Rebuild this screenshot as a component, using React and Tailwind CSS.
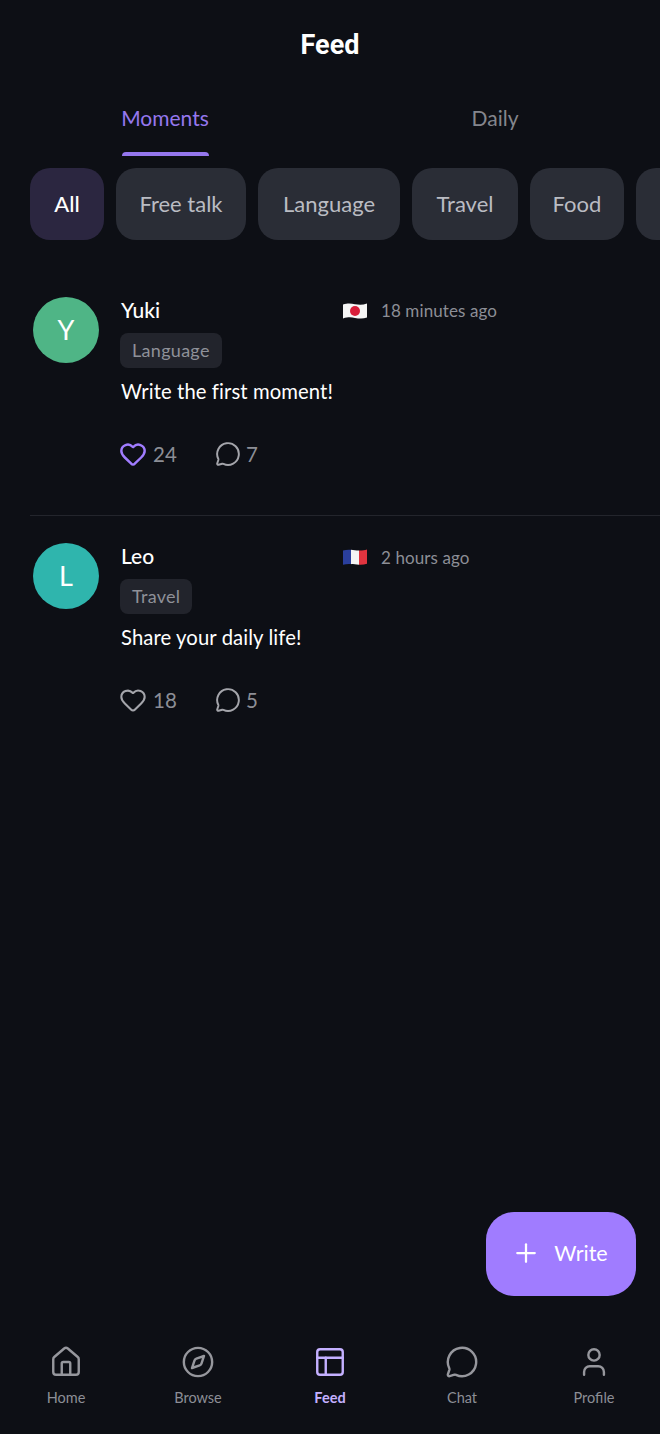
import React from "react";
import { House, Compass, PanelsTopLeft, MessageCircle, User, Heart, Plus } from "lucide-react";

const font = "font-['Lato','Noto_Sans',sans-serif]";

function JapanFlag() {
  return (
    <svg width="26" height="20" viewBox="0 0 26 20" className="mt-[2px] shrink-0">
      <path d="M1 3.5C6 2 9 2.5 13 3.2S21 4 25 2.5V16.5C21 18 17 17.6 13 16.9S6 16 1 17.5Z" fill="#f5f5f5" />
      <circle cx="13" cy="10" r="5" fill="#d81e3a" />
    </svg>
  );
}

function FranceFlag() {
  return (
    <svg width="26" height="20" viewBox="0 0 26 20" className="mt-[2px] shrink-0">
      <path d="M1 3.5C3.5 2.7 6 2.5 9 2.7V17C6 16.8 3.5 17 1 17.8Z" fill="#2a3f9d" />
      <path d="M9 2.7C11.5 2.8 14 3.4 17 3.6V17.8C14 17.6 11.5 17.1 9 17Z" fill="#f5f5f5" />
      <path d="M17 3.6C20 3.7 22.5 3.4 25 2.5V16.8C22.5 17.6 20 18 17 17.8Z" fill="#e0343f" />
    </svg>
  );
}

function Post({ initial, avatar, name, flag, time, timeY, tag, text, likes, comments, liked, divider }) {
  return (
    <article className={`flex pl-[3px] pt-[27px] pb-[45px] ${divider ? "border-b border-[#23252c]" : ""}`}>
      <div className={`flex h-[66px] w-[66px] shrink-0 items-center justify-center rounded-full text-[27px] text-white ${avatar}`}>
        {initial}
      </div>
      <div className="ml-[21px] flex-1">
        <div className="flex h-[26px] items-center">
          <div className="w-[222px] pl-px text-[21px] font-medium text-white">{name}</div>
          {flag}
          <div className={`ml-[13px] text-[17px] tracking-[0.1px] text-[#8c8e96] ${timeY}`}>{time}</div>
        </div>
        <div className="mt-[10px] flex">
          <span className="flex h-[35px] items-center rounded-lg bg-[#22242c] px-3 text-[18px] tracking-[0.3px] text-[#8f9199]">{tag}</span>
        </div>
        <p className="mt-[9px] h-[28px] pl-px text-[20.25px] leading-[28px] tracking-[0.1px] text-white">{text}</p>
        <div className="mt-[33px] flex h-[32px] items-center pl-px text-[#8c8e96]">
          <div className="flex w-[94px] items-center">
            <Heart size={28} strokeWidth={liked ? 2.1 : 1.8} className={`-ml-[2px] ${liked ? "text-[#a07cff]" : "text-[#a4a5ab]"}`} />
            <span className="ml-[6px] text-[20.5px]">{likes}</span>
          </div>
          <MessageCircle size={26} strokeWidth={1.8} className="text-[#a4a5ab]" />
          <span className="ml-[5px] text-[20.5px]">{comments}</span>
        </div>
      </div>
    </article>
  );
}

function NavItem({ icon: Icon, label, active }) {
  return (
    <div className="flex flex-1 flex-col items-center">
      <Icon size={34} strokeWidth={1.7} className={active ? "text-[#c4b0ff]" : "text-[#96979d]"} />
      <span className={`mt-[9px] text-[14.5px] leading-[20px] ${active ? "font-bold text-[#c4b0ff]" : "text-[#8c8e96]"}`}>{label}</span>
    </div>
  );
}

const chips = [
  { label: "All", width: "w-[74px]" },
  { label: "Free talk", width: "w-[130px]" },
  { label: "Language", width: "w-[142px]" },
  { label: "Travel", width: "w-[106px]" },
  { label: "Food", width: "w-[94px]" },
  { label: "", width: "w-[110px]" },
];

export default function App() {
  return (
    <div className={`relative flex h-[1434px] w-[660px] flex-col overflow-hidden bg-[#0d0f15] ${font}`}>
      <header className="flex h-[88px] shrink-0 items-center justify-center pt-[2px] text-[27px] font-bold text-white font-['Roboto',sans-serif]">
        Feed
      </header>
      <nav className="grid h-[68px] shrink-0 grid-cols-2">
        <div className="flex flex-col items-center">
          <span className="mt-[16px] text-[21px] leading-[28px] text-[#9577ee]">Moments</span>
          <span className="mt-auto h-[4px] w-[87px] rounded-t-[4px] bg-[#9577ee]" />
        </div>
        <div className="flex flex-col items-center">
          <span className="mt-[16px] text-[21px] leading-[28px] text-[#84868d]">Daily</span>
        </div>
      </nav>
      <div className="mt-[12px] flex shrink-0 gap-3 overflow-hidden pl-[30px]">
        {chips.map((c, i) => (
          <div
            key={i}
            className={`flex h-[72px] shrink-0 items-center justify-center rounded-[20px] pb-[2px] text-[22px] ${c.width} ${i === 0 ? "bg-[#2b2640] font-medium text-white" : "bg-[#2a2d36] text-[#babcc3]"}`}
          >
            {c.label}
          </div>
        ))}
      </div>
      <main className="mt-[30px] flex-1 pl-[30px]">
        <Post initial="Y" avatar="bg-[#4fb586]" name="Yuki" flag={<JapanFlag />} time="18 minutes ago" timeY="mt-[2px]" tag="Language" text="Write the first moment!" likes="24" comments="7" liked divider />
        <Post initial="L" avatar="bg-[#2fb5ad]" name="Leo" flag={<FranceFlag />} time="2 hours ago" timeY="mt-[4px]" tag="Travel" text="Share your daily life!" likes="18" comments="5" />
      </main>
      <button className="absolute left-[486px] top-[1212px] flex h-[84px] w-[150px] items-center justify-center gap-[13px] rounded-[28px] bg-[#a07cff] pb-[2px] pr-[3px] text-[21.5px] text-white">
        <Plus size={30} strokeWidth={1.8} />
        <span>Write</span>
      </button>
      <footer className="flex h-[104px] shrink-0 pt-[15px]">
        <NavItem icon={House} label="Home" />
        <NavItem icon={Compass} label="Browse" />
        <NavItem icon={PanelsTopLeft} label="Feed" active />
        <NavItem icon={MessageCircle} label="Chat" />
        <NavItem icon={User} label="Profile" />
      </footer>
    </div>
  );
}
